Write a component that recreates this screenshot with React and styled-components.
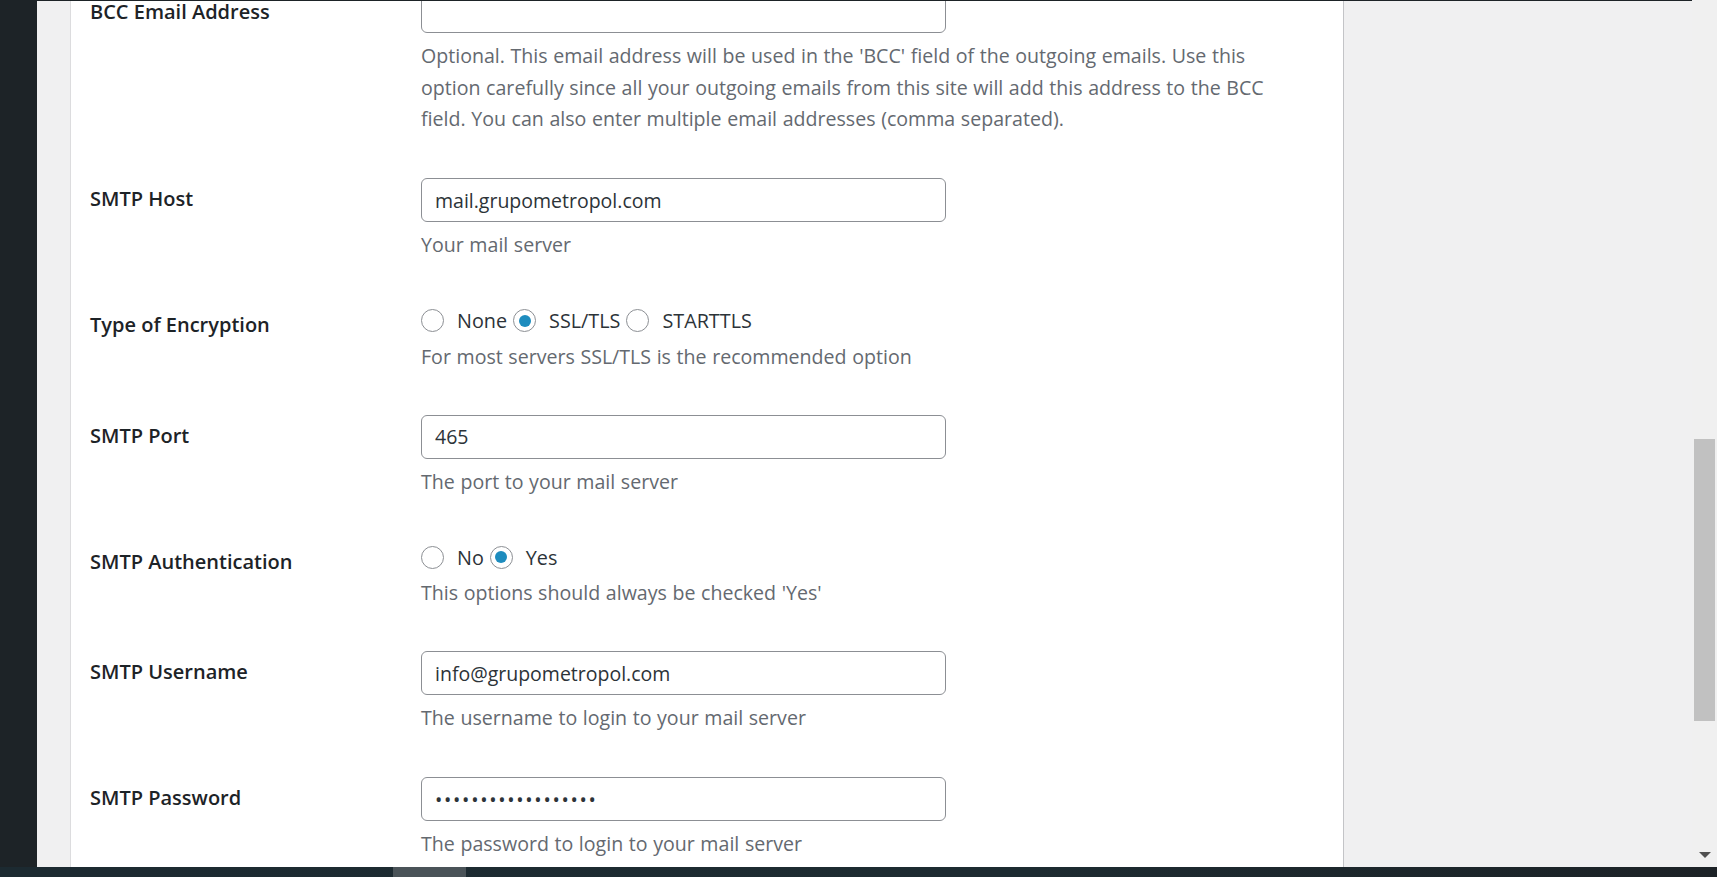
import React from "react";
import styled, { createGlobalStyle } from "styled-components";

const GlobalStyle = createGlobalStyle`
  html, body {
    margin: 0;
    padding: 0;
    height: 100%;
    overflow: hidden;
    background: #f0f0f1;
    font-family: "Open Sans", "Noto Sans", sans-serif;
  }
  * { box-sizing: border-box; }
`;

const Frame = styled.div`
  display: flex;
  flex-direction: column;
  width: 100vw;
  height: 100vh;
  overflow: hidden;
`;

const Viewport = styled.div`
  flex: 1;
  display: flex;
  min-height: 0;
`;

const Main = styled.div`
  flex: 1;
  display: flex;
  border-top: 1px solid #1d2327;
  min-width: 0;
  overflow: hidden;
`;

const AdminMenu = styled.div`
  width: 37px;
  flex: none;
  background: #1d2327;
`;

const Content = styled.div`
  flex: 1;
  display: flex;
  background: #f0f0f1;
  padding-left: 33px;
  overflow: hidden;
`;

const Card = styled.div`
  width: 1274px;
  display: flex;
  flex-direction: column;
  background: #fff;
  border-left: 1px solid #dcdcde;
  border-right: 1px solid #c3c4c7;
  padding-left: 19px;
`;

const FormTable = styled.div`
  margin-top: -34px;
  display: flex;
  flex-direction: column;
`;

const Row = styled.div`
  display: grid;
  grid-template-columns: 331px 875px;
`;

const Label = styled.div`
  padding-top: ${(p) => (p.$first ? "32px" : "30px")};
  font-size: 20px;
  line-height: 26px;
  font-weight: 600;
  color: #1d2327;
`;

const Field = styled.div`
  padding-top: 22px;
  padding-bottom: ${(p) => (p.$radio ? "20.6px" : "21.5px")};
`;

const TextInput = styled.input`
  display: block;
  width: 525px;
  height: 44px;
  margin: 0;
  padding: 0 13px;
  border: 1px solid #8c8f94;
  border-radius: 6px;
  background: #fff;
  font-family: "Open Sans", "Noto Sans", sans-serif;
  font-size: 19.5px;
  color: #2c3338;
  letter-spacing: ${(p) => (p.type === "password" ? "1.7px" : "0")};
  outline: none;
`;

const Description = styled.p`
  margin: ${(p) => (p.$radio ? "5px" : "7px")} 0 0;
  font-size: 19.6px;
  word-spacing: 0.5px;
  line-height: 31.5px;
  color: #646970;
`;

const RadioGroup = styled.div`
  display: flex;
  align-items: center;
  gap: 6px;
  height: 31.5px;
  padding-top: 2px;
`;

const RadioOption = styled.label`
  display: inline-flex;
  align-items: center;
  gap: 13px;
  font-size: 19.8px;
  line-height: 31.5px;
  color: #2c3338;
`;

const RadioCircle = styled.span`
  width: 23px;
  height: 23px;
  flex: none;
  border: 1px solid #8c8f94;
  border-radius: 50%;
  background: #fff;
  display: flex;
  align-items: center;
  justify-content: center;

  &::after {
    content: "";
    display: ${(p) => (p.$checked ? "block" : "none")};
    width: 12px;
    height: 12px;
    border-radius: 50%;
    background: #1e8cbe;
  }
`;

const Scrollbar = styled.div`
  width: 25px;
  flex: none;
  background: #f0f0f0;
  display: flex;
  flex-direction: column;
  align-items: center;
  padding-bottom: 9px;
`;

const Thumb = styled.div`
  width: 21px;
  height: ${(p) => p.$size}px;
  margin-top: ${(p) => p.$offset}px;
  background: #c1c1c1;
`;

const Spacer = styled.div`
  flex: 1;
`;

const DownArrow = styled.div`
  width: 0;
  height: 0;
  border-left: 6px solid transparent;
  border-right: 6px solid transparent;
  border-top: 6px solid #505050;
`;

const Taskbar = styled.div`
  height: 10px;
  flex: none;
  background: linear-gradient(90deg, #1c2a31 0%, #1d2b31 60%, #1c2226 100%);
  display: flex;
  padding-left: 393px;
`;

const TaskItem = styled.div`
  width: 73px;
  height: 100%;
  background: #4a5358;
`;

const rows = [
  {
    label: "BCC Email Address",
    type: "input",
    value: "",
    desc:
      "Optional. This email address will be used in the 'BCC' field of the outgoing emails. Use this option carefully since all your outgoing emails from this site will add this address to the BCC field. You can also enter multiple email addresses (comma separated).",
  },
  {
    label: "SMTP Host",
    type: "input",
    value: "mail.grupometropol.com",
    desc: "Your mail server",
  },
  {
    label: "Type of Encryption",
    type: "radio",
    options: ["None", "SSL/TLS", "STARTTLS"],
    checked: "SSL/TLS",
    desc: "For most servers SSL/TLS is the recommended option",
  },
  {
    label: "SMTP Port",
    type: "input",
    value: "465",
    desc: "The port to your mail server",
  },
  {
    label: "SMTP Authentication",
    type: "radio",
    options: ["No", "Yes"],
    checked: "Yes",
    desc: "This options should always be checked 'Yes'",
  },
  {
    label: "SMTP Username",
    type: "input",
    value: "info@grupometropol.com",
    desc: "The username to login to your mail server",
  },
  {
    label: "SMTP Password",
    type: "password",
    value: "xxxxxxxxxxxxxxxxxx",
    desc: "The password to login to your mail server",
  },
];

function SettingRow({ row, first }) {
  const isRadio = row.type === "radio";
  return (
    <Row>
      <Label $first={first}>{row.label}</Label>
      <Field $radio={isRadio}>
        {isRadio ? (
          <RadioGroup>
            {row.options.map((o) => (
              <RadioOption key={o}>
                <RadioCircle $checked={o === row.checked} />
                {o}
              </RadioOption>
            ))}
          </RadioGroup>
        ) : (
          <TextInput
            type={row.type === "password" ? "password" : "text"}
            defaultValue={row.value}
            readOnly
          />
        )}
        <Description $radio={isRadio}>{row.desc}</Description>
      </Field>
    </Row>
  );
}

export default function App() {
  return (
    <>
      <GlobalStyle />
      <Frame>
        <Viewport>
          <Main>
            <AdminMenu />
            <Content>
              <Card>
                <FormTable>
                  {rows.map((r, i) => (
                    <SettingRow key={r.label} row={r} first={i === 0} />
                  ))}
                </FormTable>
              </Card>
            </Content>
          </Main>
          <Scrollbar>
            <Thumb $offset={439} $size={282} />
            <Spacer />
            <DownArrow />
          </Scrollbar>
        </Viewport>
        <Taskbar>
          <TaskItem />
        </Taskbar>
      </Frame>
    </>
  );
}
